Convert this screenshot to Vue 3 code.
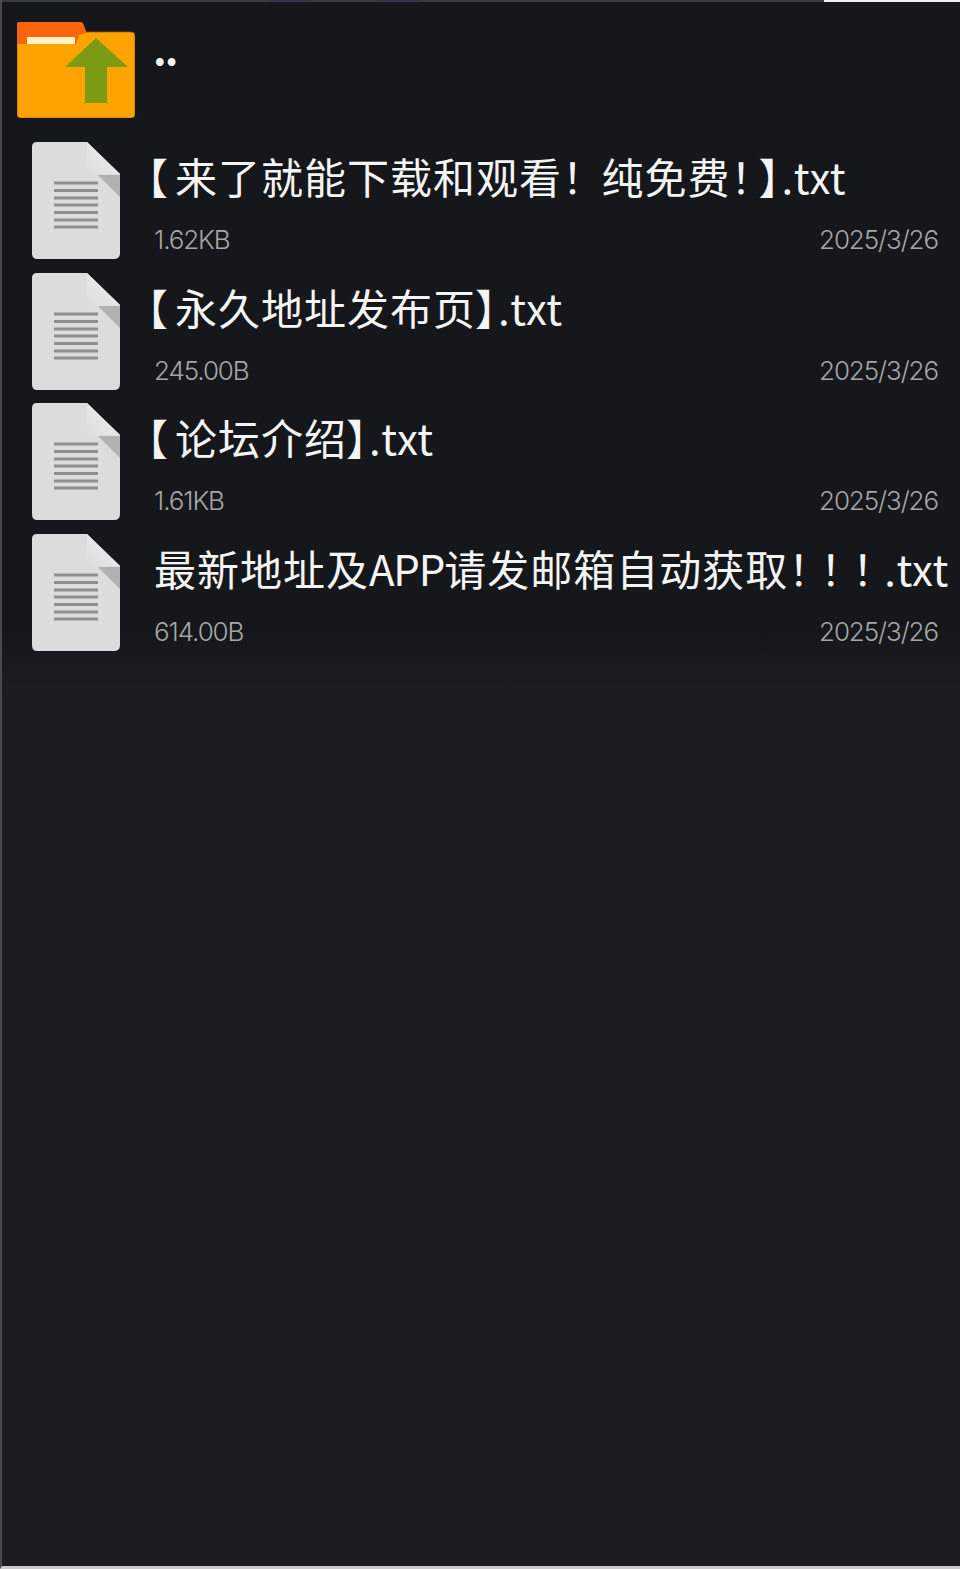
<template>
  <div class="file-page">
    <div class="top-strip">
      <span class="strip-tab strip-tab-a"></span>
      <span class="strip-tab strip-tab-b"></span>
      <span class="strip-light"></span>
    </div>
    <div class="file-list">
      <div class="parent-row">
        <svg class="folder-icon" viewBox="0 0 118 96" width="118" height="96">
          <path d="M3 0H63Q65 0 66 2L69 10H114Q118 10 118 14V92Q118 96 114 96H4Q0 96 0 92V3Q0 0 3 0Z" fill="#ffa300" stroke="#a85a00" stroke-width="0.8" />
          <path d="M3 0H63Q65 0 66 2L69 10H72L62 13L59 22H0V3Q0 0 3 0Z" fill="#f8650c" />
          <rect x="10" y="15" width="48" height="7" rx="1" fill="#fff3c4" />
          <path d="M79 16L111 45H90V81H68V45H48Z" fill="#7b9b12" />
        </svg>
        <span class="parent-name">..</span>
      </div>
      <div class="file-row" v-for="file in files" :key="file.name">
        <svg class="file-icon" viewBox="0 0 88 117" width="88" height="117">
          <defs>
            <linearGradient id="fold" x1="0" y1="1" x2="1" y2="0">
              <stop offset="0" stop-color="#dcdcdc" />
              <stop offset="1" stop-color="#f1f1f1" />
            </linearGradient>
          </defs>
          <path d="M5 0H55L88 32V111Q88 117 82 117H5Q0 117 0 111V5Q0 0 5 0Z" fill="#dcdcdc" />
          <path d="M55 0L88 32L66 33Q55 33 55 24Z" fill="url(#fold)" />
          <path d="M66 33H88V55Z" fill="#b1b1b1" />
          <path v-for="y in lineYs" :key="y" :d="`M22 ${y}H66`" stroke="#8f8f8f" stroke-width="3" />
        </svg>
        <div class="file-info">
          <div class="file-name" :class="{ bracketed: file.name.startsWith('【') }">
            <span v-for="(part, i) in splitName(file.name)" :key="i" :class="part.kind">{{ part.text }}</span>
          </div>
          <div class="file-meta">
            <span>{{ file.size }}</span>
            <span>{{ file.date }}</span>
          </div>
        </div>
      </div>
    </div>
  </div>
</template>

<script setup>
const lineYs = [41, 48.5, 56, 63, 70.5, 78, 85]

const files = [
  { name: '【来了就能下载和观看！ 纯免费！】.txt', size: '1.62KB', date: '2025/3/26' },
  { name: '【永久地址发布页】.txt', size: '245.00B', date: '2025/3/26' },
  { name: '【论坛介绍】.txt', size: '1.61KB', date: '2025/3/26' },
  { name: '最新地址及APP请发邮箱自动获取！！！.txt', size: '614.00B', date: '2025/3/26' }
]

// latin and punctuation sit at different spacing than the hanzi
const partKind = (text) => {
  if (text.startsWith('！！')) return 'punct-run'
  if (/^[！【]/.test(text)) return 'punct'
  if (/^[A-Z]/.test(text)) return 'upper'
  if (/^[a-z.]/.test(text)) return 'ext'
  return 'hanzi'
}

const splitName = (name) =>
  name.match(/[！【]+|[A-Z]+|[a-z.]+|[^！【A-Za-z.]+/g).map((text) => ({ text, kind: partKind(text) }))
</script>

<style>
html,
body {
  margin: 0;
  background: #1b1d20;
}
</style>

<style scoped>
.file-page {
  width: 960px;
  height: 1569px;
  box-sizing: border-box;
  overflow: hidden;
  background: #1b1d20;
  border-left: 2px solid #4a4a4a;
  border-bottom: 3px solid #c9c9c9;
  font-family: "Noto Sans CJK SC", "Noto Sans", sans-serif;
}

.top-strip {
  display: flex;
  height: 2px;
  background: #3a3b3e;
  position: relative;
}

.strip-tab {
  position: absolute;
  top: 0;
  height: 1px;
  background: #2d3350;
}

.strip-tab-a {
  left: 264px;
  width: 46px;
}

.strip-tab-b {
  left: 373px;
  width: 46px;
}

.strip-light {
  margin-left: auto;
  width: 136px;
  background: #f2f2f2;
}

.file-list {
  background: linear-gradient(#16171a 0, #16171a 630px, #1b1d20 690px);
  height: 690px;
  box-sizing: border-box;
  padding-top: 20px;
}

.parent-row {
  display: flex;
  align-items: flex-start;
  gap: 18px;
  height: 120px;
  padding-left: 15px;
}

.parent-name {
  color: #f4f4f4;
  font-size: 42px;
  font-weight: 700;
  line-height: 50px;
  letter-spacing: -2px;
}

.file-row {
  display: flex;
  gap: 34px;
  height: 130.6px;
  padding-left: 30px;
}

.file-icon {
  flex: none;
}

.file-info {
  flex: 1;
  min-width: 0;
  padding-right: 22px;
}

.file-name {
  color: #f4f4f4;
  font-size: 42px;
  line-height: 68px;
  white-space: nowrap;
  font-feature-settings: "palt";
}

.file-name.bracketed {
  margin-left: -8px;
}

.hanzi {
  letter-spacing: 1px;
}

.upper {
  letter-spacing: -1.2px;
}

.ext {
  letter-spacing: 0.6px;
}

.punct {
  letter-spacing: 8px;
}

.punct-run {
  letter-spacing: 11px;
}

.file-meta {
  display: flex;
  justify-content: space-between;
  margin-top: 10px;
  color: #a6a6a6;
  font-family: Inter, "Noto Sans", sans-serif;
  font-size: 26px;
  font-weight: 300;
  line-height: 40px;
  letter-spacing: -1.1px;
}
</style>
